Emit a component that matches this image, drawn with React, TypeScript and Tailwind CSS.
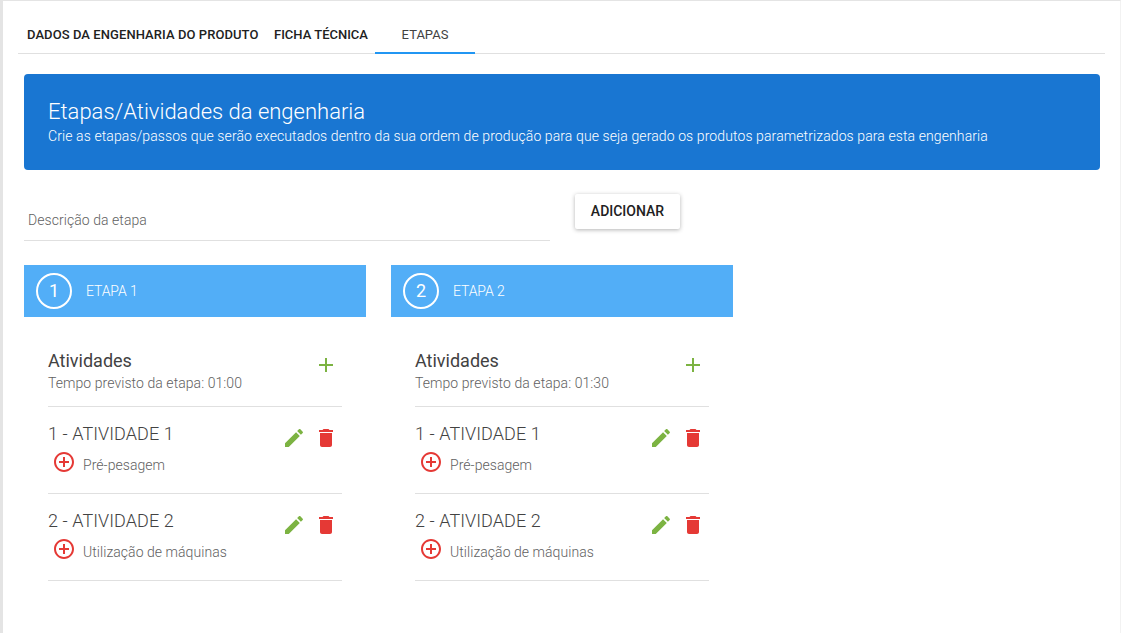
const PENCIL =
  "M3 17.25V21h3.75L17.81 9.94l-3.75-3.75L3 17.25zM20.71 7.04c.39-.39.39-1.02 0-1.41l-2.34-2.34c-.39-.39-1.02-.39-1.41 0l-1.83 1.83 3.75 3.75 1.83-1.83z";
const TRASH = "M6 19c0 1.1.9 2 2 2h8c1.1 0 2-.9 2-2V7H6v12zM19 4h-3.5l-1-1h-5l-1 1H5v2h14V4z";
const PLUS = "M19 13h-6v6h-2v-6H5v-2h6V5h2v6h6v2z";
const PLUS_CIRCLE =
  "M13 7h-2v4H7v2h4v4h2v-4h4v-2h-4V7zm-1-5C6.48 2 2 6.48 2 12s4.48 10 10 10 10-4.48 10-10S17.52 2 12 2zm0 18c-4.41 0-8-3.59-8-8s3.59-8 8-8 8 3.59 8 8-3.59 8-8 8z";

function Icon({ d, className }: { d: string; className: string }) {
  return (
    <svg viewBox="0 0 24 24" width="24" height="24" fill="currentColor" className={className}>
      <path d={d} />
    </svg>
  );
}

const etapas = [
  { n: 1, tempo: "01:00" },
  { n: 2, tempo: "01:30" },
];

const atividades = [
  { titulo: "1 - ATIVIDADE 1", tipo: "Pré-pesagem" },
  { titulo: "2 - ATIVIDADE 2", tipo: "Utilização de máquinas" },
];

function EtapaCard({ n, tempo }: { n: number; tempo: string }) {
  return (
    <div className="w-[342px]">
      <div className="flex h-[52px] items-center gap-[14px] bg-[#52aef7] px-3 text-white">
        <div className="flex h-9 w-9 items-center justify-center rounded-full border-2 border-white pb-px text-[18px]">
          {n}
        </div>
        <span className="text-[14px] font-light tracking-[-0.1px]">ETAPA {n}</span>
      </div>
      <div className="px-6">
        <div className="flex h-[90px] items-start justify-between border-b border-[#e0e0e0] pr-1 pt-[32px]">
          <div>
            <div className="text-[18px] leading-[24px] text-[#424242]">Atividades</div>
            <div className="text-[14px] font-light leading-[20px] tracking-[0.065px] text-[#616161]">
              Tempo previsto da etapa: {tempo}
            </div>
          </div>
          <Icon d={PLUS} className="mt-[4px] text-[#7cb342]" />
        </div>
        {atividades.map((a) => (
          <div key={a.titulo} className="flex h-[87px] justify-between border-b border-[#e0e0e0] pr-1">
            <div className="pt-[15px]">
              <div className="text-[18px] font-light leading-[24px] tracking-[0.07px] text-[#424242]">{a.titulo}</div>
              <div className="mt-[4px] flex items-center gap-[7px] pl-1">
                <Icon d={PLUS_CIRCLE} className="text-[#e53935]" />
                <span className="pt-[6px] text-[14px] font-light leading-[18px] tracking-[0.05px] text-[#616161]">{a.tipo}</span>
              </div>
            </div>
            <div className="flex gap-2 pt-[19px]">
              <Icon d={PENCIL} className="text-[#7cb342]" />
              <Icon d={TRASH} className="text-[#e53935]" />
            </div>
          </div>
        ))}
      </div>
    </div>
  );
}

export default function App() {
  return (
    <div className="h-[633px] overflow-hidden border-l-[3px] border-t border-r border-[#e4e4e4] border-r-[#f2f2f2] bg-white font-['Roboto',sans-serif]">
      <div className="ml-[15px] mr-[15px] flex h-[53px] items-end border-b border-[#e0e0e0]">
        <div className="flex h-[52px] items-center pl-[9px] pt-[16px] text-[13px] font-medium text-[#212121]">
          <span className="w-[247px] whitespace-nowrap tracking-[0.07px]">DADOS DA ENGENHARIA DO PRODUTO</span>
          <span className="w-[101px] whitespace-nowrap">FICHA TÉCNICA</span>
        </div>
        <div className="-mb-px flex h-[52px] w-[100px] items-center justify-center border-b-2 border-[#2196f3] pt-[16px] text-[13px] text-[#424242]">
          ETAPAS
        </div>
      </div>
      <div className="pl-[21px] pr-[20px] pt-[20px]">
        <div className="h-[96px] rounded bg-[#1976d2] px-6 pt-[25px] text-white">
          <div className="text-[22px] font-light leading-[26px]">Etapas/Atividades da engenharia</div>
          <div className="mt-[2px] text-[14px] font-light leading-[18px] tracking-[0.1px]">
            Crie as etapas/passos que serão executados dentro da sua ordem de produção para que seja gerado os produtos parametrizados para esta engenharia
          </div>
        </div>
        <div className="mt-6 flex items-start gap-[25px]">
          <div className="flex h-[47px] w-[526px] items-end border-b border-[#e0e0e0] pb-[9px] pl-1 text-[14px] font-light tracking-[0.06px] text-[#616161]">
            Descrição da etapa
          </div>
          <button className="h-[35px] w-[105px] rounded-[2px] bg-white text-[14px] font-medium text-[#212121] shadow-[0_1px_4px_rgba(0,0,0,0.3)]">
            ADICIONAR
          </button>
        </div>
        <div className="mt-6 flex gap-[25px]">
          {etapas.map((e) => (
            <EtapaCard key={e.n} n={e.n} tempo={e.tempo} />
          ))}
        </div>
      </div>
    </div>
  );
}
